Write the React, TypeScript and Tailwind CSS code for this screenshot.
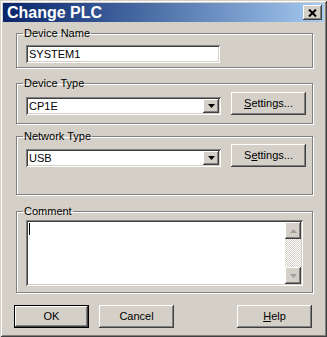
import React from "react";

const raised =
  "bg-[#d4d0c8] shadow-[inset_-1px_-1px_0_#404040,inset_1px_1px_0_#ffffff,inset_-2px_-2px_0_#808080,inset_2px_2px_0_#d4d0c8]";
const sunken =
  "bg-white shadow-[inset_1px_1px_0_#808080,inset_-1px_-1px_0_#ffffff,inset_2px_2px_0_#404040,inset_-2px_-2px_0_#d4d0c8]";
const groupBox =
  "ml-[13px] w-[297px] min-w-0 border border-[#808080] p-0 shadow-[1px_1px_0_#ffffff,inset_1px_1px_0_#ffffff]";

const Arrow = ({ up, color }: { up?: boolean; color: string }) => (
  <svg width="7" height="4" viewBox="0 0 7 4">
    <path d={up ? "M3.5 0L7 4H0z" : "M0 0h7L3.5 4z"} fill={color} />
  </svg>
);

const Combo = ({ value }: { value: string }) => (
  <div className={`${sunken} w-[195px] h-[18px] flex items-center p-[2px]`}>
    <span className="flex-1 pl-[1px] leading-[14px]">{value}</span>
    <div className={`${raised} w-[16px] h-[14px] flex items-center justify-center`}>
      <Arrow color="#000000" />
    </div>
  </div>
);

const Button = ({ children, main }: { children: React.ReactNode; main?: boolean }) => (
  <button
    type="button"
    className={`${raised} w-[75px] h-[23px] flex items-center justify-center leading-none ${main ? "border border-black" : ""}`}
  >
    {children}
  </button>
);

export default function App() {
  return (
    <div className="w-[327px] h-[337px] bg-[#d4d0c8] p-[3px] flex flex-col text-[11px] text-black font-['Liberation_Sans',Arial,sans-serif] shadow-[inset_1px_1px_0_#d4d0c8,inset_-1px_-1px_0_#404040,inset_2px_2px_0_#ffffff,inset_-2px_-2px_0_#808080]">
      {/* title bar */}
      <div className="h-[19px] flex items-center justify-between bg-linear-to-r from-[#0a246a] to-[#a6caf0] pl-[4px] pr-[2px]">
        <span className="text-white font-bold text-[16px] leading-[19px]">Change PLC</span>
        <div className={`${raised} w-[19px] h-[15px] flex items-center justify-center`}>
          <svg width="9" height="8" viewBox="0 0 9 8">
            <path d="M1 0.5L8 7.5M8 0.5L1 7.5" stroke="#000" strokeWidth="2" />
          </svg>
        </div>
      </div>

      <fieldset className={`${groupBox} mt-[5px] pb-[4px]`}>
        <legend className="ml-[6px] px-[1px] leading-[13px]">Device Name</legend>
        <div className="pl-[9px] pt-[5px]">
          <div className={`${sunken} w-[194px] h-[18px] px-[3px] leading-[18px]`}>SYSTEM1</div>
        </div>
      </fieldset>

      <fieldset className={`${groupBox} mt-[9px] pb-[8px]`}>
        <legend className="ml-[6px] px-[1px] leading-[13px]">Device Type</legend>
        <div className="pl-[9px] pt-[2px] flex items-end gap-[10px]">
          <Combo value="CP1E" />
          <Button>
            <span>
              <u>S</u>ettings...
            </span>
          </Button>
        </div>
      </fieldset>

      <fieldset className={`${groupBox} mt-[6px] pb-[27px]`}>
        <legend className="ml-[6px] px-[1px] leading-[13px]">Network Type</legend>
        <div className="pl-[9px] pt-[1px] flex items-end gap-[10px]">
          <Combo value="USB" />
          <Button>
            <span>
              S<u>e</u>ttings...
            </span>
          </Button>
        </div>
      </fieldset>

      <fieldset className={`${groupBox} mt-[10px] pb-[6px]`}>
        <legend className="ml-[6px] px-[1px] leading-[13px]">Comment</legend>
        <div className="pl-[9px] pt-[2px]">
          <div className={`${sunken} w-[277px] h-[66px] p-[2px] flex`}>
            <div className="flex-1 pl-[1px] pt-[1px]">
              <div className="w-px h-[12px] bg-black" />
            </div>
            <div className="w-[16px] flex flex-col">
              <div className={`${raised} h-[17px] flex items-center justify-center`}>
                <Arrow up color="#a0a0a0" />
              </div>
              <div className="flex-1 bg-[image:repeating-conic-gradient(#d4d0c8_0_25%,#ffffff_0_50%)] bg-[length:2px_2px]" />
              <div className={`${raised} h-[17px] flex items-center justify-center`}>
                <Arrow color="#a0a0a0" />
              </div>
            </div>
          </div>
        </div>
      </fieldset>

      <div className="mt-[12px] pl-[11px] flex items-center">
        <Button main>OK</Button>
        <div className="ml-[10px]">
          <Button>Cancel</Button>
        </div>
        <div className="ml-auto mr-[12px]">
          <Button>
            <span>
              <u>H</u>elp
            </span>
          </Button>
        </div>
      </div>
    </div>
  );
}
